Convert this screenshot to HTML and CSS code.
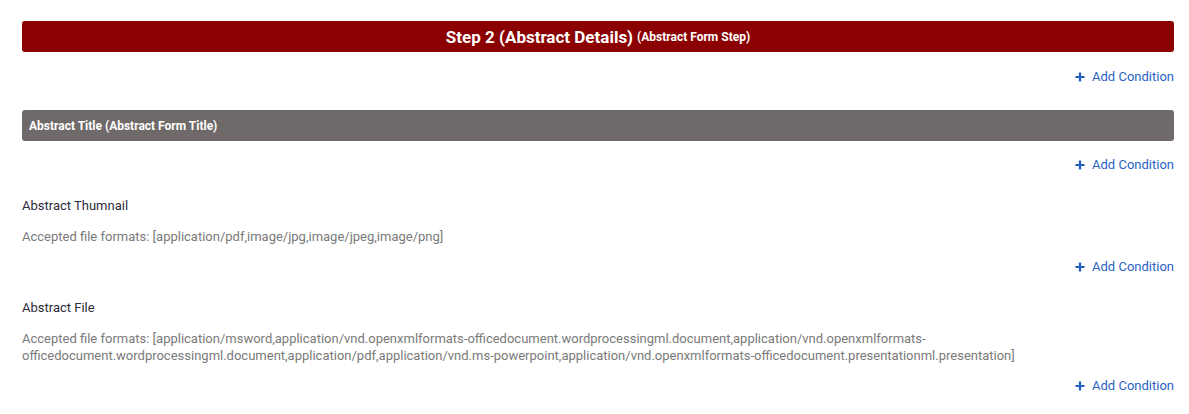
FILE: index.html
```html
<!DOCTYPE html>
<html>
<head>
<meta charset="utf-8">
<link rel="stylesheet" href="styles.css">
</head>
<body>
<div class="page">
  <div class="step-bar">Step 2 (Abstract Details) <small>(Abstract Form Step)</small></div>
  <div class="cond-row cond-first"><a class="add-cond"><svg width="10" height="10" viewBox="0 0 10 10"><path d="M5 0.5v9M0.5 5h9" stroke="#1f5fbf" stroke-width="2.2"/></svg>Add Condition</a></div>
  <div class="title-bar">Abstract Title (Abstract Form Title)</div>
  <div class="cond-row"><a class="add-cond"><svg width="10" height="10" viewBox="0 0 10 10"><path d="M5 0.5v9M0.5 5h9" stroke="#1f5fbf" stroke-width="2.2"/></svg>Add Condition</a></div>
  <div class="field">
    <div class="field-label">Abstract Thumnail</div>
    <div class="field-help">Accepted file formats: [application/pdf,image/jpg,image/jpeg,image/png]</div>
  </div>
  <div class="cond-row cond-after-field"><a class="add-cond"><svg width="10" height="10" viewBox="0 0 10 10"><path d="M5 0.5v9M0.5 5h9" stroke="#1f5fbf" stroke-width="2.2"/></svg>Add Condition</a></div>
  <div class="field">
    <div class="field-label">Abstract File</div>
    <div class="field-help">Accepted file formats: [application/msword,application/vnd.openxmlformats-officedocument.wordprocessingml.document,application/vnd.openxmlformats-officedocument.wordprocessingml.document,application/pdf,application/vnd.ms-powerpoint,application/vnd.openxmlformats-officedocument.presentationml.presentation]</div>
  </div>
  <div class="cond-row cond-after-field cond-last"><a class="add-cond"><svg width="10" height="10" viewBox="0 0 10 10"><path d="M5 0.5v9M0.5 5h9" stroke="#1f5fbf" stroke-width="2.2"/></svg>Add Condition</a></div>
</div>
</body>
</html>
```
FILE: styles.css
```css
html, body {
  margin: 0;
  padding: 0;
  background: #fff;
}
body {
  font-family: Roboto, "Liberation Sans", sans-serif;
}
.page {
  padding: 21px 15px 0 22px;
}
.step-bar {
  background: #8b0000;
  color: #fff;
  border-radius: 3px;
  height: 31px;
  display: flex;
  align-items: center;
  justify-content: center;
  font-weight: bold;
  font-size: 17px;
  gap: 4px;
}
.step-bar small {
  font-size: 12px;
  font-weight: bold;
  margin-top: 1px;
}
.cond-row {
  display: flex;
  justify-content: flex-end;
  height: 17px;
  margin-top: 15px;
}
.cond-first {
  margin-top: 16px;
}
.cond-after-field {
  margin-top: 13px;
}
.cond-last {
  margin-top: 13px;
}
.add-cond {
  display: flex;
  align-items: center;
  gap: 7px;
  color: #2a63c4;
  font-size: 13px;
  cursor: pointer;
}
.title-bar {
  margin-top: 25px;
  background: #6f6a69;
  color: #fff;
  border-radius: 3px;
  height: 31px;
  display: flex;
  align-items: center;
  padding-left: 7px;
  font-weight: bold;
  font-size: 12px;
}
.field {
  margin-top: 24px;
}
.field-label {
  color: #2b2b3a;
  font-size: 13px;
  line-height: 17px;
}
.field-help {
  margin-top: 14px;
  color: #7a7a7a;
  font-size: 13px;
  line-height: 17px;
}
```
